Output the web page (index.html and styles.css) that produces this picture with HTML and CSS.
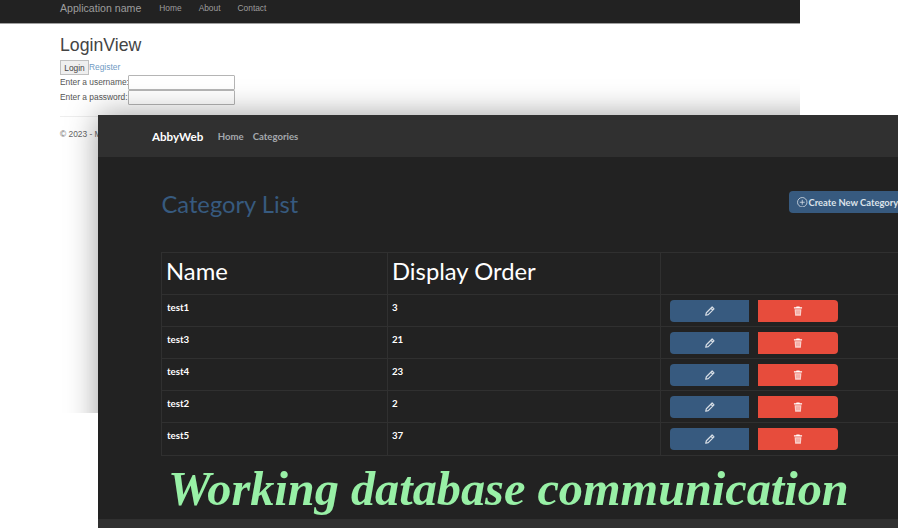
FILE: index.html
```html
<!DOCTYPE html>
<html lang="en">
<head>
<meta charset="utf-8">
<title>Working database communication</title>
<link rel="stylesheet" href="styles.css">
</head>
<body>
<main class="desktop">
  <section class="win-back">
    <nav class="bs-nav">
      <span class="bs-brand">Application name</span>
      <a class="bs-link">Home</a><a class="bs-link">About</a><a class="bs-link">Contact</a>
    </nav>
    <div class="bs-body">
      <h2 class="bs-title">LoginView</h2>
      <div class="bs-tabs"><button class="bs-btn">Login</button><a class="bs-reg">Register</a></div>
      <div class="bs-field"><label>Enter a username:</label><input class="bs-input" type="text"></div>
      <div class="bs-field"><label>Enter a password:</label><input class="bs-input" type="password"></div>
      <hr class="bs-hr">
      <footer class="bs-foot">© 2023 - My ASP.NET Application</footer>
    </div>
    <div class="front-shadow"></div>
  </section>

  <section class="win-front">
    <nav class="dk-nav">
      <span class="dk-brand">AbbyWeb</span>
      <a class="dk-link">Home</a><a class="dk-link">Categories</a>
    </nav>
    <div class="dk-body">
      <div class="dk-head">
        <h1 class="dk-title">Category List</h1>
        <a class="dk-create">
          <svg class="ic-plus" viewBox="0 0 16 16" fill="none" stroke="currentColor" stroke-width="1.2"><circle cx="8" cy="8" r="7.2"/><path d="M8 4.200v7.600M4.200 8h7.600"/></svg>
          <span>Create New Category</span>
        </a>
      </div>
      <table class="dk-table">
        <thead><tr><th class="c1">Name</th><th class="c2">Display Order</th><th class="c3"></th></tr></thead>
        <tbody>
          <tr><td>test1</td><td>3</td><td><div class="acts"><a class="act act-edit"><svg class="ic" viewBox="0 0 16 16"><use href="#pen"/></svg></a><a class="act act-del"><svg class="ic" viewBox="0 0 16 16"><use href="#bin"/></svg></a></div></td></tr>
          <tr><td>test3</td><td>21</td><td><div class="acts"><a class="act act-edit"><svg class="ic" viewBox="0 0 16 16"><use href="#pen"/></svg></a><a class="act act-del"><svg class="ic" viewBox="0 0 16 16"><use href="#bin"/></svg></a></div></td></tr>
          <tr><td>test4</td><td>23</td><td><div class="acts"><a class="act act-edit"><svg class="ic" viewBox="0 0 16 16"><use href="#pen"/></svg></a><a class="act act-del"><svg class="ic" viewBox="0 0 16 16"><use href="#bin"/></svg></a></div></td></tr>
          <tr><td>test2</td><td>2</td><td><div class="acts"><a class="act act-edit"><svg class="ic" viewBox="0 0 16 16"><use href="#pen"/></svg></a><a class="act act-del"><svg class="ic" viewBox="0 0 16 16"><use href="#bin"/></svg></a></div></td></tr>
          <tr><td>test5</td><td>37</td><td><div class="acts"><a class="act act-edit"><svg class="ic" viewBox="0 0 16 16"><use href="#pen"/></svg></a><a class="act act-del"><svg class="ic" viewBox="0 0 16 16"><use href="#bin"/></svg></a></div></td></tr>
        </tbody>
      </table>
    </div>
    <div class="dk-foot"></div>
  </section>

  <p class="caption">Working database communication</p>
</main>
<svg class="defs" width="0" height="0" aria-hidden="true">
  <symbol id="pen" viewBox="0 0 16 16">
    <path fill="none" stroke="currentColor" stroke-width="1.900" stroke-linejoin="round" d="M11.400 1.600l3 3L5.200 13.800 1.200 14.800l1-4zM9.400 3.600l3 3"/>
  </symbol>
  <symbol id="bin" viewBox="0 0 16 16">
    <path fill="#fff" d="M5.600 .6h4.800l.6 1.400h3.500v2H1.500V2H5z"/>
    <path fill="#f9cfca" d="M2.600 5h10.800l-.8 10.400H3.400z"/>
    <path stroke="#ee8a7e" stroke-width="1" d="M6 7v6M8 7v6M10 7v6"/>
  </symbol>
</svg>
</body>
</html>
```
FILE: styles.css
```css
* { box-sizing: border-box; }
html, body { margin: 0; padding: 0; background: #fff; }
.desktop { position: relative; width: 898px; height: 528px; overflow: hidden; background: #fff; }
.defs { position: absolute; }

/* back window */
.win-back { position: absolute; left: 0; top: 0; width: 800px; height: 413px; overflow: hidden; background: #fff; font-family: "Liberation Sans", Arial, sans-serif; color: #333; font-size: 8.400px; }
.front-shadow { position: absolute; left: 98px; top: 115px; width: 800px; height: 413px; box-shadow: 0 0 30px rgba(0,0,0,.38); }
.bs-nav { display: flex; align-items: center; height: 24px; padding: 0 0 8px 60px; background: #222; border-bottom: 1px solid #a0a0a0; }
.bs-brand { font-size: 10.600px; color: #9d9d9d; margin-right: 18px; }
.bs-link { color: #9d9d9d; margin-right: 17px; font-size: 8.400px; }
.bs-body { padding: 0 0 0 60px; }
.bs-title { margin: 12px 0 5px; font-size: 17.700px; line-height: 19px; font-weight: 400; color: #444; }
.bs-tabs { display: flex; align-items: flex-start; height: 15px; }
.bs-btn { width: 29px; height: 15px; padding: 0; font: 8.400px "Liberation Sans", Arial, sans-serif; color: #444; background: #efefef; border: 1px solid #c0c0c0; }
.bs-reg { color: #6f9ac4; line-height: 15px; }
.bs-field { display: flex; align-items: center; height: 15px; color: #555; }
.bs-field label { width: 67.500px; padding-bottom: 2px; white-space: nowrap; }
.bs-input { width: 107px; height: 15px; padding: 0; border: 1px solid #b5b5b5; border-radius: 1px; background: #fff; }
.bs-hr { margin: 11px 0 0; width: 740px; height: 0; border: 0; border-top: 1px solid #eee; }
.bs-foot { margin-top: 12px; color: #666; white-space: nowrap; }

/* front window */
.win-front { position: absolute; left: 98px; top: 115px; width: 800px; height: 413px; overflow: hidden; background: #222; font-family: Lato, sans-serif; color: #fff; }
.dk-nav { display: flex; align-items: center; height: 42px; padding-left: 54px; background: #303030; font-size: 9.600px; }
.dk-brand { font-size: 11.600px; font-weight: 700; color: #fff; margin-right: 14.500px; }
.dk-link { color: #a5a9ad; margin-right: 9px; font-weight: 700; }
.dk-body { padding: 0 0 0 63px; height: 362px; }
.dk-head { display: flex; justify-content: space-between; align-items: flex-start; height: 95px; }
.dk-title { margin: 33px 0 0 .5px; font-size: 23.700px; line-height: 29px; font-weight: 400; color: #375a7f; }
.dk-create { display: flex; align-items: center; gap: 1px; flex: none; width: 116px; height: 22px; margin: 34px -7px 0 0; padding-left: 8px; background: #375a7f; border-radius: 4px; font-size: 9.400px; font-weight: 700; color: #dde3ea; white-space: nowrap; }
.ic-plus { width: 10.500px; height: 10.500px; }
.dk-table { width: 760px; border-collapse: collapse; table-layout: fixed; }
.dk-table th, .dk-table td { border: 1px solid #303030; text-align: left; padding: 0 5px; }
.dk-table th { height: 42px; padding: 0 0 5px 4px; font-size: 23.800px; font-weight: 400; color: #fff; }
.dk-table td { height: 32px; vertical-align: top; padding-top: 6px; font-size: 9.700px; line-height: 12px; font-weight: 700; }
.dk-table tr:last-child td { height: 33px; }
.dk-table td:nth-child(2) { padding-left: 4px; }
.c1 { width: 226px; }
.c2 { width: 273px; }
.dk-table td:last-child { padding: 5px 0 0 9px; }
.acts { display: flex; gap: 9px; }
.act { display: flex; align-items: center; justify-content: center; width: 79px; height: 22px; }
.act-edit { background: #375a7f; color: #d6dde5; border-radius: 4px 0 0 4px; }
.act-del { width: 80px; background: #e74c3c; color: #f7c9c3; border-radius: 0 4px 4px 0; }
.ic { width: 10px; height: 10px; }
.dk-foot { height: 9px; background: #303030; }

/* caption over the screenshots */
.caption { position: absolute; left: 168px; top: 459px; margin: 0; font-family: "Liberation Serif", serif; font-style: italic; font-weight: 700; font-size: 48.300px; line-height: 60px; color: #98f0a6; white-space: nowrap; }
```
